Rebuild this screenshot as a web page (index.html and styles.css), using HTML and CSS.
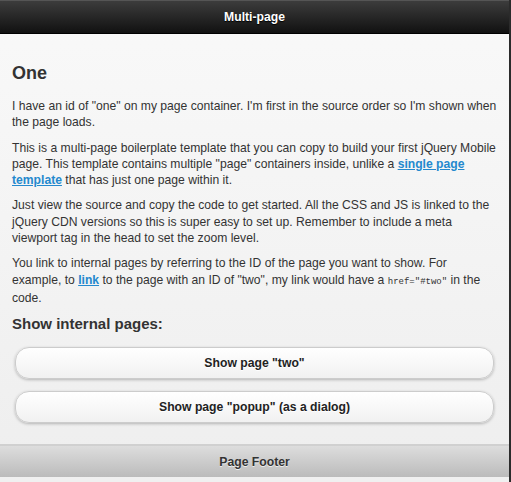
FILE: index.html
```html
<!DOCTYPE html>
<html>
<head>
    <meta charset='utf-8'>
    <title>Multi-page template</title>
    <meta name='viewport' content='width=device-width, initial-scale=1'>
    <link rel="stylesheet" href="styles.css">
</head>
<body>
    <div class="page" id="one">
        <header class="cabecalho">
            <h1>Multi-page</h1>
        </header>
        <div class="conteudo">
            <h2>One</h2>
            <p>I have an id of "one" on my page container. I'm first in the source order so I'm shown when the page loads.</p>
            <p>This is a multi-page boilerplate template that you can copy to build your first jQuery Mobile page. This template contains multiple "page" containers inside, unlike a <a href="#">single page template</a> that has just one page within it.</p>
            <p>Just view the source and copy the code to get started. All the CSS and JS is linked to the jQuery CDN versions so this is super easy to set up. Remember to include a meta viewport tag in the head to set the zoom level.</p>
            <p>You link to internal pages by referring to the ID of the page you want to show. For example, to <a href="#two">link</a> to the page with an ID of "two", my link would have a <code>href="#two"</code> in the code.</p>
            <h3>Show internal pages:</h3>
            <a href="#two" class="botao">Show page "two"</a>
            <a href="#popup" class="botao">Show page "popup" (as a dialog)</a>
        </div>
        <footer class="rodape">
            <h4>Page Footer</h4>
        </footer>
    </div>
</body>
</html>
```

FILE: styles.css
```css
html, body {
    margin: 0;
    padding: 0;
    height: 100%;
}
body {
    background-color: #f0f0f0;
    font-family: "Liberation Sans", Arial, sans-serif;
    border-right: 2px solid #2b2b2b;
    box-sizing: border-box;
}
.page {
    background-image: linear-gradient(#f9f9f9, #eeeeee);
}
.cabecalho {
    background-image: linear-gradient(#3c3c3c, #111111);
    border-top: 1px solid #555;
    border-bottom: 1px solid #000;
    height: 32px;
    display: flex;
    align-items: center;
    justify-content: center;
}
.cabecalho h1 {
    margin: 0;
    color: white;
    font-size: 12.2px;
    font-weight: bold;
    text-shadow: 0 1px 1px #000;
}
.conteudo {
    padding: 17px 11px 9px 12px;
    color: #333;
}
.conteudo h2 {
    font-size: 18px;
    margin: 12px 0 14px 0;
}
.conteudo p {
    font-size: 12.15px;
    line-height: 16.3px;
    margin: 0 0 9px 0;
}
.conteudo h3 {
    font-size: 15px;
    margin: 9px 0 15px 0;
}
.conteudo a {
    color: #2489ce;
    font-weight: bold;
}
code {
    font-family: "Liberation Mono", monospace;
    font-size: 9px;
}
.conteudo .botao {
    display: block;
    margin: 0 4px 12px 3px;
    height: 30px;
    line-height: 30px;
    text-align: center;
    border: 1px solid #cccccc;
    border-radius: 14px;
    background-image: linear-gradient(#ffffff, #f1f1f1);
    box-shadow: 0 1px 3px rgba(0, 0, 0, 0.25);
    color: #222;
    font-size: 12.2px;
    text-decoration: none;
    text-shadow: 0 1px 0 #fff;
}
.rodape {
    background-image: linear-gradient(#dddddd, #bbbbbb);
    border-top: 2px solid #d0d0d0;
    height: 31px;
    display: flex;
    align-items: center;
    justify-content: center;
}
.rodape h4 {
    margin: 0;
    font-size: 12.2px;
    color: #333;
    text-shadow: 0 1px 0 #eee;
}
```
